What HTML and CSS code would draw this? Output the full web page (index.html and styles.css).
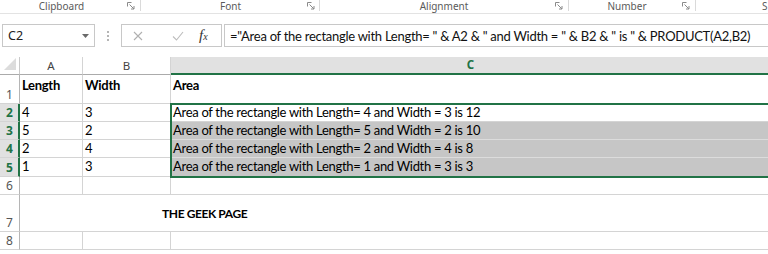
FILE: index.html
```html
<!DOCTYPE html>
<html>
<head>
<meta charset="utf-8">
<link rel="stylesheet" href="styles.css">
</head>
<body>
<div class="ribbon">
  <div class="grp g1"><span class="lbl">Clipboard</span><svg class="launch" viewBox="0 0 8 8"><path d="M0.5 4.5V0.5H4.5" /><path d="M2.5 2.5L7 7M7 4V7H4" /></svg></div>
  <div class="grp g2"><span class="lbl">Font</span><svg class="launch" viewBox="0 0 8 8"><path d="M0.5 4.5V0.5H4.5" /><path d="M2.5 2.5L7 7M7 4V7H4" /></svg></div>
  <div class="grp g3"><span class="lbl">Alignment</span><svg class="launch" viewBox="0 0 8 8"><path d="M0.5 4.5V0.5H4.5" /><path d="M2.5 2.5L7 7M7 4V7H4" /></svg></div>
  <div class="grp g4"><span class="lbl">Number</span><svg class="launch" viewBox="0 0 8 8"><path d="M0.5 4.5V0.5H4.5" /><path d="M2.5 2.5L7 7M7 4V7H4" /></svg></div>
  <div class="grp g5"><span class="lbl">S</span></div>
</div>

<div class="fbar">
  <div class="namebox"><span>C2</span><svg class="caret" viewBox="0 0 7 4"><path d="M0 0H7L3.5 4Z"/></svg></div>
  <div class="dots"><i></i><i></i><i></i></div>
  <div class="btns">
    <svg class="ico" viewBox="0 0 10 10"><path d="M1 1L9 9M9 1L1 9"/></svg>
    <svg class="ico ok" viewBox="0 0 12 10"><path d="M1 5.5L4.5 9L11 1"/></svg>
    <span class="fx"><em>f</em><span>x</span></span>
  </div>
  <div class="formula">="Area of the rectangle with Length= " &amp; A2 &amp; " and Width = " &amp; B2 &amp; " is " &amp; PRODUCT(A2,B2)</div>
</div>

<div class="sheet">
  <div class="corner"><svg viewBox="0 0 12 12"><path d="M12 0V12H0Z"/></svg></div>
  <div class="ch">A</div>
  <div class="ch">B</div>
  <div class="ch sel">C</div>

  <div class="rh tall">1</div>
  <div class="c top b">Length</div>
  <div class="c top b">Width</div>
  <div class="c top b">Area</div>

  <div class="rh rs">2</div>
  <div class="c">4</div>
  <div class="c">3</div>
  <div class="c">Area of the rectangle with Length= 4 and Width = 3 is 12</div>

  <div class="rh rs">3</div>
  <div class="c">5</div>
  <div class="c">2</div>
  <div class="c hl">Area of the rectangle with Length= 5 and Width = 2 is 10</div>

  <div class="rh rs">4</div>
  <div class="c">2</div>
  <div class="c">4</div>
  <div class="c hl">Area of the rectangle with Length= 2 and Width = 4 is 8</div>

  <div class="rh rs">5</div>
  <div class="c">1</div>
  <div class="c">3</div>
  <div class="c hl">Area of the rectangle with Length= 1 and Width = 3 is 3</div>

  <div class="rh">6</div>
  <div class="c"></div>
  <div class="c"></div>
  <div class="c"></div>

  <div class="rh tall">7</div>
  <div class="c merged b">THE GEEK PAGE</div>

  <div class="rh">8</div>
  <div class="c"></div>
  <div class="c"></div>
  <div class="c"></div>

  <div class="selbox"></div>
</div>
</body>
</html>
```

FILE: styles.css
```css
html, body {
  margin: 0;
  padding: 0;
  background: #fff;
  overflow: hidden;
  width: 768px;
  height: 254px;
}

body {
  font-family: Lato, "Liberation Sans", sans-serif;
  color: #000;
}

/* ribbon group labels */
.ribbon {
  display: flex;
  height: 13px;
  border-bottom: 1px solid #e3e3e3;
  font-family: "Noto Sans", "Open Sans", sans-serif;
  font-size: 10px;
  color: #5a5a5a;
}

.grp {
  display: flex;
  align-items: flex-start;
  border-right: 1px solid #dadada;
  height: 11px;
  box-sizing: border-box;
}

.g1 { width: 141px; padding-right: 5px; }
.g2 { width: 179px; padding-left: 13px; padding-right: 4px; }
.g3 { width: 249px; padding-left: 13px; padding-right: 5px; }
.g4 { width: 127px; padding-left: 3px; padding-right: 5px; }
.g5 { flex: 1; border-right: 0; padding-left: 66px; }

.lbl {
  flex: 1;
  text-align: center;
  line-height: 12px;
  white-space: nowrap;
}
.g1 .lbl { padding-right: 4px; }
.g5 .lbl { text-align: left; flex: none; }

.launch {
  width: 8px;
  height: 8px;
  margin-top: 2px;
  fill: none;
  stroke: #8a8a8a;
  stroke-width: 1;
}

/* formula bar */
.fbar {
  display: flex;
  align-items: stretch;
  height: 23px;
  margin-top: 10px;
  padding-left: 2px;
}

.namebox {
  width: 93px;
  box-sizing: border-box;
  border: 1px solid #c8c8c8;
  display: flex;
  align-items: center;
  justify-content: space-between;
  padding: 0 5px 0 5px;
  font-family: "Noto Sans", "Open Sans", sans-serif;
  font-size: 12.5px;
  color: #222;
}

.caret {
  width: 7px;
  height: 4px;
  fill: #6a6a6a;
}

.dots {
  width: 26px;
  display: flex;
  flex-direction: column;
  align-items: center;
  justify-content: center;
  gap: 2px;
}
.dots i {
  width: 2px;
  height: 2px;
  background: #b5b5b5;
}

.btns {
  width: 101px;
  box-sizing: border-box;
  border: 1px solid #c8c8c8;
  display: flex;
  align-items: center;
  padding-left: 11px;
}

.ico {
  width: 10px;
  height: 10px;
  fill: none;
  stroke: #b0b0b0;
  stroke-width: 1.1;
  margin-right: 29px;
}
.ico.ok {
  width: 12px;
  margin-right: 15px;
  stroke: #bdbdbd;
}

.fx {
  font-family: "Liberation Serif", serif;
  font-style: italic;
  color: #333;
  font-size: 15px;
  display: flex;
  align-items: baseline;
}
.fx em { font-style: italic; }
.fx span { font-size: 10px; margin-left: 0; }

.formula {
  flex: 1;
  margin-left: 2px;
  border: 1px solid #c8c8c8;
  border-right: 0;
  display: flex;
  align-items: center;
  padding-left: 5px;
  font-size: 13px;
  letter-spacing: -0.27px;
  white-space: nowrap;
  overflow: hidden;
  color: #111;
}

/* sheet grid */
.sheet {
  position: relative;
  margin-top: 10px;
  display: grid;
  grid-template-columns: 20px 63px 88px 600px;
  grid-template-rows: 18px 29px 18px 18px 18px 19px 18px 37px 18px;
  font-size: 13px;
  letter-spacing: -0.3px;
}

.sheet > div {
  box-sizing: border-box;
}

.corner {
  border-right: 1px solid #c9c9c9;
  border-bottom: 1px solid #ababab;
  display: flex;
  align-items: flex-end;
  justify-content: flex-end;
  padding: 0 3px 4px 0;
}
.corner svg {
  width: 12px;
  height: 12px;
  fill: #dcdcdc;
}

.ch {
  border-right: 1px solid #d4d4d4;
  border-bottom: 1px solid #ababab;
  text-align: center;
  font-family: "Noto Sans", "Open Sans", sans-serif;
  font-size: 11.5px;
  letter-spacing: 0;
  line-height: 17px;
  color: #444;
}
.ch.sel {
  background: #e1e1e1;
  color: #217346;
  font-weight: bold;
  border-bottom: 2px solid #217346;
  line-height: 16px;
}

.rh {
  border-right: 1px solid #b5b5b5;
  border-bottom: 1px solid #d4d4d4;
  font-family: "Noto Sans", "Open Sans", sans-serif;
  font-size: 12px;
  letter-spacing: 0;
  color: #555;
  display: flex;
  align-items: flex-end;
  justify-content: center;
  line-height: 17px;
}
.rh.rs {
  background: #e1e1e1;
  color: #217346;
  font-weight: bold;
  border-right: 2px solid #217346;
  padding-left: 1px;
}

.c {
  border-right: 1px solid #d4d4d4;
  border-bottom: 1px solid #d4d4d4;
  padding-left: 2px;
  line-height: 17px;
  white-space: nowrap;
  overflow: hidden;
}
.c.top {
  padding-top: 2px;
}
.c.b {
  font-weight: bold;
}
.c.hl {
  background: #c6c6c6;
  border-bottom-color: #dcdcdc;
}

.merged {
  grid-column: 2 / 5;
  display: flex;
  align-items: center;
  padding-left: 142px;
  font-size: 12px;
  letter-spacing: -0.4px;
}

.selbox {
  position: absolute;
  left: 170px;
  top: 46px;
  width: 620px;
  height: 75px;
  border: 2px solid #217346;
  box-sizing: border-box;
  pointer-events: none;
}
```
